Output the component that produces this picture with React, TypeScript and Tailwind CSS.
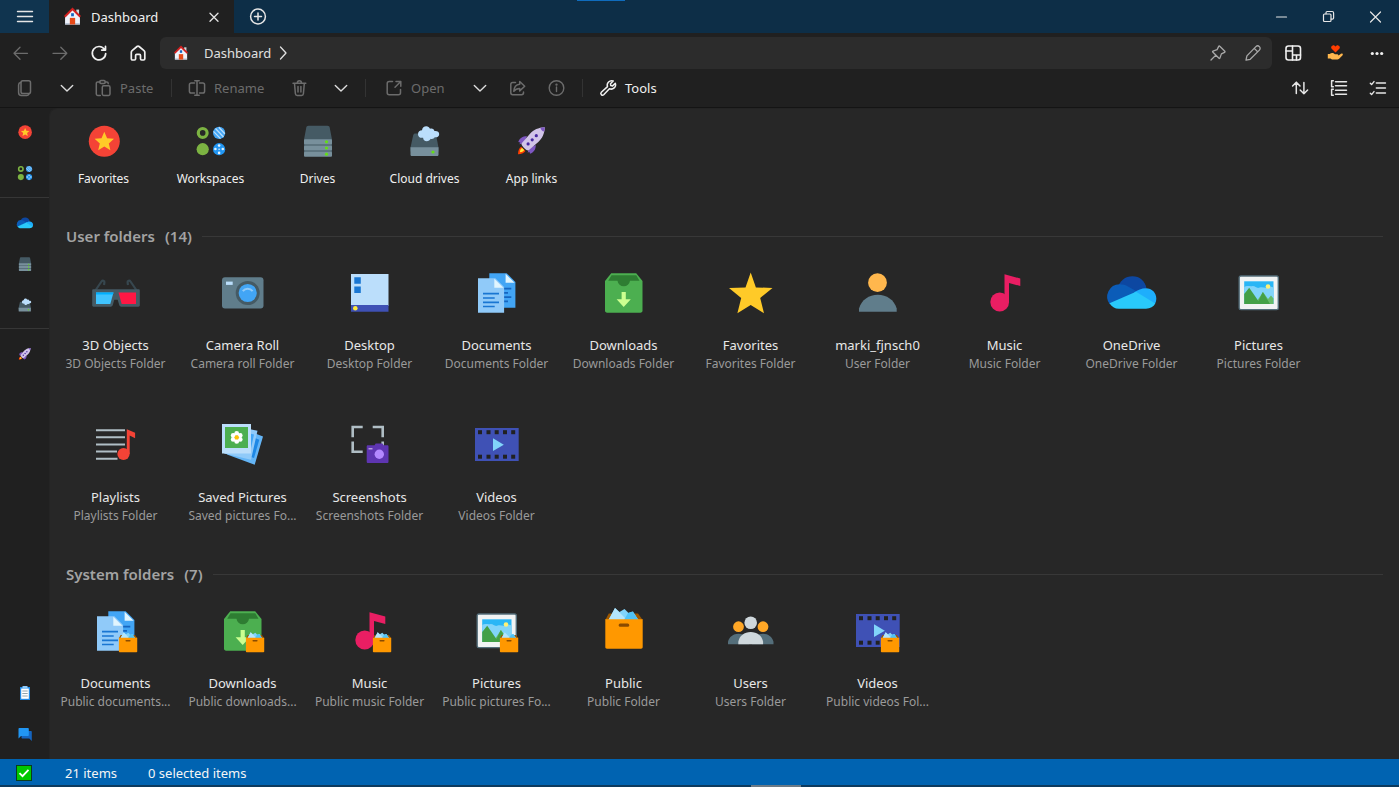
import React from "react";

type IconProps = { className?: string };

/* ---------- line icons ---------- */

function Line({ className = "size-4", children, w = 1.3 }: { className?: string; children: React.ReactNode; w?: number }) {
  return (
    <svg
      viewBox="0 0 16 16"
      className={"shrink-0 overflow-visible " + className}
      fill="none"
      stroke="currentColor"
      strokeWidth={w}
      strokeLinecap="round"
      strokeLinejoin="round"
      aria-hidden="true"
    >
      {children}
    </svg>
  );
}

const MenuIcon = () => (
  <Line w={1.4}><path d="M.5 2.5h15M.5 7.5h15M.5 12.5h15" /></Line>
);
const CloseIcon = ({ className }: IconProps) => (
  <Line className={className} w={1.3}><path d="M4 4.300l8 8M12 4.300l-8 8" /></Line>
);
const PlusCircle = () => (
  <Line w={1.5}><circle cx="8" cy="7.500" r="7.400" /><path d="M8 4v7M4.500 7.500h7" /></Line>
);
const BackIcon = () => (
  <Line><path d="M14.500 8.300H1.300M7 2.300L1 8.300l6 6" /></Line>
);
const ForwardIcon = () => (
  <Line><path d="M1 8.300h13.500M8.800 2.300l6 6-6 6" /></Line>
);
const RefreshIcon = () => (
  <Line w={1.700}><path d="M13.600 4.500A6.700 6.700 0 1 0 14.700 8.600M14.500 1.400v3.700h-3.800" /></Line>
);
const HomeIcon = () => (
  <Line w={1.700}><path d="M1.300 7.200c0-.7.3-1.200.8-1.600l4.900-4.100c.6-.5 1.500-.5 2.100 0L14 5.600c.5.400.8 1 .8 1.600v6.600c0 .7-.5 1.200-1.200 1.200h-1.900c-.7 0-1.200-.5-1.200-1.200v-3.300c0-.6-.5-1.100-1.100-1.100H6.700c-.6 0-1.100.5-1.100 1.100v3.300c0 .7-.5 1.200-1.200 1.200H2.500c-.7 0-1.200-.5-1.200-1.200z" /></Line>
);
const ChevronRight = () => (
  <Line className="size-4"><path d="M5.500 2l5.500 6-5.500 6" /></Line>
);
const ChevronDown = () => (
  <Line className="size-4" w={1.400}><path d="M2.300 5.500L8 11l5.700-5.500" /></Line>
);
const PinIcon = () => (
  <Line><path d="M9.800 1.200l5 5c.4.4.3.900-.2 1.100l-3.200 1.600-1.500 4.200c-.1.400-.6.500-.9.200L2.700 7c-.3-.3-.2-.8.200-.9l4.200-1.500 1.600-3.200c.2-.5.800-.6 1.100-.2zM5.600 10.400L1 15" /></Line>
);
const PencilIcon = () => (
  <Line><path d="M10.900 1.600a2.400 2.400 0 0 1 3.500 3.500L5.200 14.300 1 15.200l.9-4.300zM9.300 3.400l3.300 3.300" /></Line>
);
const LayoutIcon = () => (
  <Line w={1.600}><rect x="1" y="1" width="14.500" height="14" rx="2.500" /><path d="M7.500 1v14M1 6h6.500M7.500 10h8M11.500 10v5" /></Line>
);
const DotsIcon = () => (
  <svg viewBox="0 0 16 16" className="size-4" fill="currentColor" aria-hidden="true">
    <circle cx="3.300" cy="8.500" r="1.600" /><circle cx="8" cy="8.500" r="1.600" /><circle cx="12.700" cy="8.500" r="1.600" />
  </svg>
);
const CopyIcon = () => (
  <Line w={1.500}><rect x="4" y=".8" width="9.500" height="12.700" rx="1.800" /><path d="M3.600 2.600C2.400 2.900 1.600 3.700 1.600 5v7.500c0 2 1.100 3 2.800 3h5.400c1 0 1.700-.5 2.100-1.300" /></Line>
);
const PasteIcon = () => (
  <Line w={1.500}><path d="M5 1.900H2.700c-.8 0-1.400.6-1.400 1.400v10.800c0 .8.600 1.400 1.400 1.400h2.600M10.200 1.900h1.600c.8 0 1.400.6 1.400 1.400v.5" /><rect x="4.800" y=".6" width="5.400" height="2.900" rx="1.200" /><rect x="7.300" y="5.800" width="7.700" height="9.700" rx="1.400" /></Line>
);
const RenameIcon = () => (
  <Line w={1.500}><path d="M5.500 3H2.200C1.100 3 .4 3.700.4 4.800v6.400c0 1.100.7 1.800 1.800 1.800h3.300M10.500 3h3.300c1.100 0 1.800.7 1.800 1.800v6.400c0 1.100-.7 1.800-1.800 1.800h-3.300M8 .7v14.600M5.800.7h4.400M5.800 15.300h4.400" /></Line>
);
const TrashIcon = () => (
  <Line w={1.500}><path d="M1 3.300h12.800M5.300 3.100C5.300 1.700 6.100.8 7.400.8s2.100.9 2.100 2.300M2.500 3.500l.9 10.200c.1 1.100.8 1.700 1.800 1.700h4.400c1 0 1.700-.6 1.800-1.700l.9-10.200M6 6.500v5.500M8.900 6.500v5.500" /></Line>
);
const OpenIcon = () => (
  <Line w={1.500}><path d="M6.500 1.500H3.200C2 1.500 1.200 2.300 1.200 3.500v9.300c0 1.200.8 2 2 2h9.300c1.200 0 2-.8 2-2V9.500M10 1.500h4.800v4.800M14.500 1.800L9 7.300" /></Line>
);
const ShareIcon = () => (
  <Line w={1.500}><path d="M5.500 2.500H2.700c-1.100 0-1.900.8-1.900 1.900v8.400c0 1.100.8 1.900 1.900 1.900h8.900c1.100 0 1.900-.8 1.900-1.900V12M9.700 1.500l5 4.700-5 4.700V8.400c-2.700 0-4.400.7-5.900 2.900.2-4 2.200-6.700 5.900-7.100z" /></Line>
);
const InfoIcon = () => (
  <Line w={1.400}><circle cx="7.500" cy="8" r="7.300" /><path d="M7.500 7v4.500" /><circle cx="7.500" cy="4.600" r=".5" fill="currentColor" /></Line>
);
const WrenchIcon = () => (
  <Line w={1.500}><path d="M15.300 3.200a4.400 4.400 0 0 1-5.900 5.500l-5.700 6a1.700 1.700 0 0 1-2.400-2.400l6.200-5.700A4.400 4.400 0 0 1 13.200 1l-2.700 2.800.3 1.800 1.800.3z" /></Line>
);
const SortIcon = () => (
  <Line w={1.500}><path d="M4.300 13.500V2.300M.6 6l3.700-3.800L8 6M11.900 2.500v11.200M8.200 10l3.700 3.800 3.700-3.800" /></Line>
);
const GroupIcon = () => (
  <Line w={1.500}><path d="M4.500 1.800h11M4.500 5.800h11M4.500 10.200h11M4.500 14.200h11M2.300.8H.6v5.900h1.700M2.300 9.300H.6v5.900h1.700" /></Line>
);
const ChecklistIcon = () => (
  <Line w={1.400}><path d="M6.300 3h9.200M6.300 8h9.200M6.300 13h9.200M.3 3.300l1.300 1.300L4 1.600M.3 13.300l1.300 1.300L4 11.600" /></Line>
);
const MinimizeIcon = () => <Line w={1.200}><path d="M2.500 8h10" /></Line>;
const RestoreIcon = () => (
  <Line w={1.200}><rect x="2.500" y="5" width="7.500" height="7.500" rx="1" /><path d="M5 4.800V3.700c0-.8.500-1.200 1.200-1.200h5c.9 0 1.400.5 1.400 1.400v5c0 .7-.5 1.200-1.300 1.200h-1.100" /></Line>
);
const WindowClose = () => <Line w={1.200}><path d="M2.500 3l10 10M12.500 3l-10 10" /></Line>;

/* ---------- colour icons ---------- */

function Art({ className = "size-12", box = 48, children }: { className?: string; box?: number; children: React.ReactNode }) {
  return (
    <svg viewBox={`0 0 ${box} ${box}`} className={"shrink-0 overflow-visible " + className} aria-hidden="true">
      {children}
    </svg>
  );
}

const HouseIcon = ({ className }: IconProps) => (
  <Art box={16} className={className}>
    <path d="M11.600 1.500h2.600v5h-2.600z" fill="#cfd8dc" />
    <path d="M8 1L1 8v7.500h14V8z" fill="#eef2fb" />
    <path d="M1 14.200h14v1.300H1z" fill="#b8c4d6" />
    <path d="M.7 8.200L8 .9l7.300 7.300" fill="none" stroke="#d3201f" strokeWidth="1.900" />
    <path d="M5.500 9.300h5v6.200h-5z" fill="#e64a19" />
    <path d="M6.700 4.900h2.600v2.900H6.700z" fill="#1565c0" />
  </Art>
);
const DonateIcon = () => (
  <Art box={16} className="size-4">
    <path d="M8.500 7.500L4.700 3.800C3.700 2.800 4 .7 5.800.4 7 .2 8 .8 8.500 1.700 9 .8 10 .2 11.200.4c1.800.3 2.100 2.400 1.100 3.400z" fill="#ff3d00" />
    <path d="M.8 9h1.900c1.200-1 2.800-1.300 4.200-.5l1 .8h2.300c1.400 0 1.400 1.700.2 1.800l2.600-1.600c1-1 2.200-1.200 2.700-.5.300.4.2.9-.3 1.400l-3 3c-.8.700-1.500 1-2.600 1H5l-1.600-.9H.8z" fill="#ffb74d" />
  </Art>
);

const StarBadge = ({ className }: IconProps) => (
  <Art box={32} className={className}>
    <circle cx="16.300" cy="16.300" r="15.500" fill="#f44336" />
    <path d="M16.300 6.800l2.800 6.400 6.900.6-5.200 4.600 1.600 6.800-6.100-3.600-6.100 3.600 1.600-6.800-5.200-4.600 6.900-.6z" fill="#ffca28" />
  </Art>
);
const WorkspacesIcon = ({ className }: IconProps) => (
  <Art box={32} className={className}>
    <circle cx="7.700" cy="7.900" r="4.400" fill="none" stroke="#7cb342" strokeWidth="3.200" />
    <circle cx="7.700" cy="24.200" r="6.100" fill="#7cb342" />
    <circle cx="24.100" cy="7.900" r="6.100" fill="#42a5f5" />
    <path d="M20.500 3.500l8 8.500M23.800 2.300l6 6.400M18.500 6.400l7 7.200" stroke="#bbdefb" strokeWidth="1.300" />
    <circle cx="24.100" cy="24.200" r="6.100" fill="#2196f3" />
    <g fill="#e3f2fd"><circle cx="24.100" cy="20.600" r="1.300" /><circle cx="20.400" cy="24" r="1.300" /><circle cx="27.800" cy="24" r="1.300" /><circle cx="24.100" cy="27.900" r="1.300" /><circle cx="24.100" cy="24.200" r=".8" /></g>
  </Art>
);
const DrivesIcon = ({ className }: IconProps) => (
  <Art box={32} className={className}>
    <path d="M6.500.7h19c1.300 0 2 .7 2.200 1.900L30 14.500v13H2v-13L4.300 2.600C4.500 1.400 5.200.7 6.500.7z" fill="#455a64" />
    <g fill="#78909c"><rect x="2" y="14.200" width="28" height="5.200" rx="1" /><rect x="2" y="20.400" width="28" height="5.200" rx="1" /><rect x="2" y="26.600" width="28" height="5.200" rx="1" /></g>
    <g fill="#64dd17"><circle cx="24.500" cy="16.800" r="1.600" /><circle cx="24.500" cy="23" r="1.600" /><circle cx="24.500" cy="29.200" r="1.600" /></g>
  </Art>
);
const CloudDriveIcon = ({ className }: IconProps) => (
  <Art box={32} className={className}>
    <path d="M6.500 8.500H25c1.200 0 1.800.6 2.100 1.700L29.500 22.500v4H1.500v-4L4.200 10.200c.3-1.100 1-1.700 2.300-1.700z" fill="#455a64" />
    <path d="M1.500 22.300h28v7.200c0 1-.6 1.500-1.500 1.500H3c-.9 0-1.500-.5-1.500-1.500z" fill="#78909c" />
    <circle cx="24" cy="27" r="1.600" fill="#64dd17" />
    <path d="M13 5.300c.3-2.500 2-4 4.300-4 1.800 0 3 .9 3.700 2.500 2-.9 4.200.2 4.400 2.300 2.700-.4 4.800.8 4.800 2.900 0 2.400-2 3.700-4.500 3.300-.8 1.400-2.400 1.900-4 1.400-.8 1.600-2.200 2.500-3.900 2.500-2.300 0-3.600-1.500-3.700-3.500-2.600.7-5.100-.8-5.100-3.500 0-2.500 1.800-3.900 4-3.900z" fill="#bbdefb" />
  </Art>
);
const RocketIcon = ({ className }: IconProps) => (
  <Art box={32} className={className}>
    <g transform="translate(-1 0)">
      <path d="M12 11.200c-4.500 0-7.500 2-8.700 5.800l2 .6-1 1.700 4.500-1.300zM20.800 20c0 4.500-2 7.500-5.800 8.700l-.6-2-1.700 1 1.300-4.500z" fill="#7e57c2" />
      <path d="M3 29.200c.2-3.800 1.200-6.300 3.300-7.400l4.100 4.100c-1.100 2.100-3.600 3.100-7.400 3.300z" fill="#ff3d00" />
      <path d="M4.900 27.300c.2-2.300.9-3.800 2.200-4.300l2.100 2.100c-.5 1.300-2 2-4.300 2.200z" fill="#ffeb3b" />
      <path d="M29.800 2.200c-6.700.3-11 2.500-14.800 6.500L6.500 18.600c-.4 2.200 4.700 7.300 6.900 6.900l9.900-8.500c4-3.800 6.200-8.100 6.500-14.800z" fill="#d1c4e9" />
      <path d="M29.800 2.200c-1.500.1-3 .3-4.400.6.2 1.900 1.900 3.600 3.800 3.800.3-1.400.5-2.900.6-4.400z" fill="#7e57c2" />
      <g fill="#4527a0"><circle cx="21.300" cy="10.700" r="1.600" /><circle cx="17.200" cy="14.800" r="1.600" /><circle cx="13.100" cy="18.900" r="1.600" /></g>
    </g>
  </Art>
);

const GlassesIcon = () => (
  <Art>
    <path d="M3 22L9.500 12.500c1-1.500 3.300-1 2.900 1L12 16M45 22l-6.500-9.500c-1-1.500-3.300-1-2.900 1L36 16" fill="none" stroke="#37474f" strokeWidth="2.200" />
    <path d="M1.500 20.300h45c.9 0 1.300.5 1.300 1.300v14.700c0 .9-.5 1.400-1.400 1.400H29.300c-1 0-1.600-.5-2-1.400l-1.600-5.600h-3.400l-1.600 5.600c-.4.900-1 1.400-2 1.400H1.600c-.9 0-1.400-.5-1.400-1.400V21.600c0-.8.400-1.300 1.300-1.300z" fill="#455a64" />
    <path d="M4 23.500h17.500L18.300 35H4z" fill="#40c4ff" /><path d="M4 23.500h17.500l-.6 2H4z" fill="#00b0ff" />
    <path d="M26.500 23.500H44V35H29.700z" fill="#ff1744" />
  </Art>
);
const CameraIcon = () => (
  <Art>
    <rect x="3" y="8.300" width="41.500" height="31.300" rx="3" fill="#607d8b" />
    <rect x="7" y="12.600" width="6.700" height="3.300" fill="#bbdefb" />
    <circle cx="28.700" cy="24" r="12" fill="#455a64" /><circle cx="28.700" cy="24" r="9.100" fill="#42a5f5" />
    <path d="M23.800 22.200a6.200 6.200 0 0 1 9.800 0" fill="none" stroke="#90caf9" strokeWidth="2" />
  </Art>
);
const DesktopIcon = () => (
  <Art>
    <path d="M5 5h37.500v32H5z" fill="#bbdefb" /><path d="M5 36h37.500v6.700H5z" fill="#3f51b5" />
    <path d="M8.300 8.300h6.500v6.500H8.300zM8.300 17.400h6.500v6.500H8.300z" fill="#1976d2" />
    <circle cx="9.300" cy="39.300" r="2.300" fill="#ffeb3b" />
  </Art>
);
const DocsArt = () => (
  <>
    <path d="M16.300 4.300h17.400l8.700 8.700v25.700H16.300z" fill="#42a5f5" /><path d="M32.600 4.800v8.900h9z" fill="#e1f5fe" />
    <path d="M28 19.700h10.300M28 23.900h7M28 28.100h10.300M28 32.300h7" stroke="#1565c0" strokeWidth="1.700" />
    <path d="M5 9.200h17.400l8.700 8.700v25.800H5z" fill="#90caf9" /><path d="M21.300 9.700v9h9z" fill="#e1f5fe" />
    <path d="M10 24.700h16M10 29h11.700M10 33.300h16M10 37.500h11.700" stroke="#1976d2" strokeWidth="1.700" />
  </>
);
const DownloadsArt = () => (
  <>
    <path d="M11.200 4.300h25L42.500 12v29.500c0 1.400-.8 2.200-2.200 2.200H7.200C5.800 43.700 5 42.900 5 41.500V12z" fill="#4caf50" />
    <path d="M11.500 6.300h24.800l3.200 5.500H30a6.300 6.300 0 0 1-12.500 0H8.200z" fill="#2e7d32" />
    <path d="M21.600 23h4.200v7.200h5L23.700 38l-7.100-7.800h5z" fill="#ccff90" />
  </>
);
const StarIcon = () => (
  <Art><path d="M23.700 3.500l5.200 14.900 16.600.5-12.300 10 3.800 15.400-13.300-8.400-13.300 8.400L14.200 28.900 2 18.900l16.500-.5z" fill="#ffca28" /></Art>
);
const UserIcon = () => (
  <Art><circle cx="23.500" cy="13.700" r="9.400" fill="#ffb74d" /><path d="M5 42.700v-3.200c2.500-8.700 10-13.800 18.800-13.800s16.400 5.100 18.900 13.800v3.200z" fill="#607d8b" /></Art>
);
const MusicArt = () => (
  <><circle cx="18.700" cy="33" r="9.400" fill="#e91e63" /><path d="M23.500 5.300l15.800 4.200V17L28 14v19h-4.500z" fill="#e91e63" /></>
);
const OneDriveIcon = ({ className }: IconProps) => (
  <Art className={className}>
    <path d="M9 20C12 11.800 17 7.300 24.500 7.300c7.200 0 12.300 4.500 14 12l-10 4z" fill="#0d47a1" />
    <path d="M11.500 15.200c3.500 0 6 .8 8.500 2.300l11 6.300L1.800 35.300A12.500 12.500 0 0 1 11.500 15.200z" fill="#0b5cb8" />
    <path d="M26 23.500c3.800-2.300 7.500-4.200 12-4.200 5.700 0 10.300 4.500 10.300 10.200 0 2-.5 3.900-1.500 5.400z" fill="#1eaefc" />
    <path d="M1.500 34.200L28 22.700l19.300 11.800c-1.800 3.400-5 5.200-9.300 5.200H11c-4.300 0-7.400-2-9.500-5.500z" fill="#29c9fb" />
  </Art>
);
const PicturesArt = () => (
  <>
    <rect x="3.500" y="6.300" width="40.500" height="35" rx="2.500" fill="#546e7a" />
    <rect x="4.900" y="7.700" width="37.700" height="32.200" rx="1" fill="#f1f3f3" />
    <path d="M9.200 12.300h29.300V35H9.200z" fill="#29b6f6" />
    <path d="M9.200 18c3-2 6 0 8.500-1 3 0 4 3 7 1.500 3-1 5 1 8 0 2-1 4-1 5.800 0V35H9.200z" fill="#81d4fa" />
    <circle cx="33" cy="17.500" r="2.300" fill="#fff176" />
    <path d="M20 35l8-12 5 7 3-3.500 2.500 3V35z" fill="#66bb6a" /><path d="M22 35l5.800-12L35 35z" fill="#43a047" />
    <path d="M9.200 25l5-6.200L25.500 35H9.200z" fill="#43a047" />
  </>
);
const PlaylistIcon = () => (
  <Art>
    <path d="M4 9.200h29M4 16.300h29M4 23.400h29M4 30.600h21M4 37.700h21.500" stroke="#b0bec5" strokeWidth="2" />
    <circle cx="31.500" cy="33" r="6.100" fill="#f44336" /><path d="M34.800 8.200l8.300 3.500v5.500l-5.400-2.600V33h-2.900z" fill="#f44336" />
  </Art>
);
const SavedIcon = () => (
  <Art>
    <path d="M33 11.300l11 4.200-8.300 28.200L8 33.500z" fill="#64b5f6" /><path d="M36 17l4.300 1.700L35 37l-6-2z" fill="#1e88e5" />
    <path d="M28 7.500l10.500 2.200-6.500 29L5 32.500z" fill="#90caf9" /><path d="M31 12.500l4 1L31 32l-5-1z" fill="#42a5f5" />
    <path d="M3 3h29v29.500H3z" fill="#bbdefb" /><path d="M6 6h23v21H6z" fill="#4caf50" />
    <g fill="#fff"><circle cx="17.700" cy="12.400" r="2.400" /><circle cx="17.700" cy="20.400" r="2.400" /><circle cx="14.200" cy="14.400" r="2.400" /><circle cx="14.200" cy="18.400" r="2.400" /><circle cx="21.200" cy="14.400" r="2.400" /><circle cx="21.200" cy="18.400" r="2.400" /></g>
    <circle cx="17.700" cy="16.400" r="2.200" fill="#ffc107" />
  </Art>
);
const ScreenshotIcon = () => (
  <Art>
    <path d="M6.700 16.300V6h10M26.700 6h10v10.300M6.700 20.500v10.300h10M36.700 20.500v6" fill="none" stroke="#b0bec5" strokeWidth="2.600" />
    <path d="M28.500 24.300l1.200-1.700h6.800l1.200 1.700h3.500c.8 0 1.300.5 1.300 1.300v15.100c0 .8-.5 1.300-1.300 1.300H22c-.8 0-1.300-.5-1.300-1.300V25.600c0-.8.500-1.300 1.300-1.300z" fill="#5e35b1" />
    <path d="M22.500 27h4v1.500h-4z" fill="#b39ddb" /><circle cx="33.300" cy="33.300" r="4.700" fill="#b388ff" />
  </Art>
);
const VideoArt = () => (
  <>
    <path d="M2 7h43.700v33H2z" fill="#3f51b5" />
    <g fill="#212121">{[5, 13.500, 21.700, 30, 38.200].map((x) => (<g key={x}><rect x={x} y="9.200" width="4" height="4" /><rect x={x} y="33.700" width="4" height="4" /></g>))}</g>
    <path d="M20 17.300v12.800l10.800-6.400z" fill="#81d4fa" />
  </>
);
const BoxArt = () => (
  <>
    <path d="M5.300 13l3.500-6.500H38l4.700 6.500z" fill="#9c5700" />
    <path d="M8.500 13L15 1l4.500 4 5-3 4 4 4.500-1.500L38.500 13z" fill="#81d4fa" /><path d="M8.500 13L15 1l12 12z" fill="#b3e5fc" />
    <path d="M24 13l4-7 4.500-1.500L38.500 13z" fill="#4fc3f7" />
    <path d="M5.300 12.300h37.400V40c0 1-.6 1.700-1.700 1.700H7c-1.100 0-1.700-.7-1.700-1.700z" fill="#ff9800" />
    <rect x="18.700" y="16.600" width="10.500" height="3.200" rx="1.500" fill="#8a4b00" />
  </>
);
const BoxBadge = () => <g transform="translate(24.300 24.800) scale(.49)"><BoxArt /></g>;
const UsersIcon = () => (
  <Art>
    <g fill="#ffa726"><circle cx="11.500" cy="19.700" r="5.400" /><circle cx="36" cy="19.700" r="5.400" /></g>
    <path d="M1 37.300v-2.500c1.200-5 5.300-8.100 10.500-8.100S21 29.500 22 34v3.300zM25 37.300V34c1-4.500 5.800-7.300 11-7.300s9.300 3.100 10.500 8.100v2.500z" fill="#546e7a" />
    <circle cx="23.700" cy="15.700" r="6.300" fill="#cfd8dc" /><path d="M11.300 37.300v-2.500c1-6 6-9.800 12.400-9.800s11.400 3.800 12.400 9.800v2.500z" fill="#cfd8dc" />
  </Art>
);
const ClipboardIcon = () => (
  <Art box={16} className="size-4">
    <path d="M3 2h10v13H3z" fill="#1e88e5" /><path d="M4.200 3.500h7.600v10.300H4.200z" fill="#fff" />
    <path d="M5.500 1h5v2.800h-5z" fill="#90caf9" /><path d="M5.300 6h5.400M5.300 8.500h5.400M5.300 11h5.400" stroke="#90a4ae" strokeWidth="1" />
  </Art>
);
const ChatIcon = () => (
  <Art box={16} className="size-4">
    <path d="M4.500 5h9.300c.6 0 1 .4 1 1v9l-2.500-2.500H5.500c-.6 0-1-.4-1-1z" fill="#1565c0" />
    <path d="M2.500 2h8.300c.6 0 1 .4 1 1v6c0 .6-.4 1-1 1H4l-2.500 2.500V3c0-.6.400-1 1-1z" fill="#2196f3" />
  </Art>
);

/* ---------- data ---------- */

type Folder = { name: string; kind: string; icon: React.ReactNode };

const shortcuts = [
  { name: "Favorites", icon: <StarBadge className="size-8" /> },
  { name: "Workspaces", icon: <WorkspacesIcon className="size-8" /> },
  { name: "Drives", icon: <DrivesIcon className="size-8" /> },
  { name: "Cloud drives", icon: <CloudDriveIcon className="size-8" /> },
  { name: "App links", icon: <RocketIcon className="size-8" /> },
];

const userFolders: Folder[] = [
  { name: "3D Objects", kind: "3D Objects Folder", icon: <GlassesIcon /> },
  { name: "Camera Roll", kind: "Camera roll Folder", icon: <CameraIcon /> },
  { name: "Desktop", kind: "Desktop Folder", icon: <DesktopIcon /> },
  { name: "Documents", kind: "Documents Folder", icon: <Art><DocsArt /></Art> },
  { name: "Downloads", kind: "Downloads Folder", icon: <Art><DownloadsArt /></Art> },
  { name: "Favorites", kind: "Favorites Folder", icon: <StarIcon /> },
  { name: "marki_fjnsch0", kind: "User Folder", icon: <UserIcon /> },
  { name: "Music", kind: "Music Folder", icon: <Art><MusicArt /></Art> },
  { name: "OneDrive", kind: "OneDrive Folder", icon: <OneDriveIcon className="size-12" /> },
  { name: "Pictures", kind: "Pictures Folder", icon: <Art><PicturesArt /></Art> },
  { name: "Playlists", kind: "Playlists Folder", icon: <PlaylistIcon /> },
  { name: "Saved Pictures", kind: "Saved pictures Fo...", icon: <SavedIcon /> },
  { name: "Screenshots", kind: "Screenshots Folder", icon: <ScreenshotIcon /> },
  { name: "Videos", kind: "Videos Folder", icon: <Art><VideoArt /></Art> },
];

const systemFolders: Folder[] = [
  { name: "Documents", kind: "Public documents...", icon: <Art><DocsArt /><BoxBadge /></Art> },
  { name: "Downloads", kind: "Public downloads...", icon: <Art><DownloadsArt /><BoxBadge /></Art> },
  { name: "Music", kind: "Public music Folder", icon: <Art><MusicArt /><BoxBadge /></Art> },
  { name: "Pictures", kind: "Public pictures Fo...", icon: <Art><PicturesArt /><BoxBadge /></Art> },
  { name: "Public", kind: "Public Folder", icon: <Art><BoxArt /></Art> },
  { name: "Users", kind: "Users Folder", icon: <UsersIcon /> },
  { name: "Videos", kind: "Public videos Fol...", icon: <Art><VideoArt /><BoxBadge /></Art> },
];

/* ---------- parts ---------- */

function IconButton({ label, className, disabled, children }: { label: string; className: string; disabled?: boolean; children: React.ReactNode }) {
  return (
    <button type="button" aria-label={label} disabled={disabled} className={"flex h-full shrink-0 items-center justify-center " + className}>
      {children}
    </button>
  );
}

const Separator = () => <span className="mx-1 h-[18px] w-px shrink-0 bg-[#333333]" />;

function TitleBar() {
  return (
    <header className="relative flex h-[33px] bg-[#0d2e47] text-[#e6e6e6]">
      <IconButton label="Menu" className="w-[49px] bg-[#10344f]"><MenuIcon /></IconButton>
      <div className="flex w-[185px] items-center bg-[#202020] pl-[15px] pr-3">
        <HouseIcon className="size-[17px]" />
        <span className="ml-[10px] flex-1 text-[13px] leading-5 text-[#f0f0f0]">Dashboard</span>
        <IconButton label="Close tab" className="w-4"><CloseIcon className="size-4" /></IconButton>
      </div>
      <IconButton label="New tab" className="w-12"><PlusCircle /></IconButton>
      <div className="ml-auto flex h-full">
        <IconButton label="Minimize" className="w-[47px]"><MinimizeIcon /></IconButton>
        <IconButton label="Restore" className="w-[47px]"><RestoreIcon /></IconButton>
        <IconButton label="Close" className="w-[47px]"><WindowClose /></IconButton>
      </div>
      <span className="absolute left-[577px] top-0 h-px w-12 bg-[#0f6cbd]" />
    </header>
  );
}

function NavBar() {
  return (
    <nav aria-label="Location" className="flex h-10 items-center pl-px text-[#f0f0f0]">
      <IconButton label="Back" disabled className="w-[39px] text-[#6c6c6c]"><BackIcon /></IconButton>
      <IconButton label="Forward" disabled className="w-[39px] text-[#6c6c6c]"><ForwardIcon /></IconButton>
      <IconButton label="Refresh" className="w-[39px]"><RefreshIcon /></IconButton>
      <IconButton label="Home" className="w-[39px]"><HomeIcon /></IconButton>
      <div className="ml-[3px] flex h-8 flex-1 items-center rounded-md bg-[#2c2c2c] pl-[14px]">
        <HouseIcon className="size-[14px]" />
        <a href="#dashboard" className="ml-4 text-[13px] leading-5 text-[#e0e0e0]">Dashboard</a>
        <IconButton label="Show subfolders" className="ml-1 w-4 text-[#e0e0e0]"><ChevronRight /></IconButton>
        <div className="ml-auto flex h-full pr-[2px] text-[#a8a8a8]">
          <IconButton label="Pin" className="w-[35px]"><PinIcon /></IconButton>
          <IconButton label="Edit address" className="w-[35px]"><PencilIcon /></IconButton>
        </div>
      </div>
      <div className="flex h-full pr-px">
        <IconButton label="Layout" className="w-[42px]"><LayoutIcon /></IconButton>
        <IconButton label="Donate" className="w-[42px]"><DonateIcon /></IconButton>
        <IconButton label="More" className="w-[42px]"><DotsIcon /></IconButton>
      </div>
    </nav>
  );
}

function ToolBar() {
  return (
    <div role="toolbar" aria-label="File actions" className="flex h-[35px] items-center border-b border-[#141414] pb-1 text-[13px] leading-5 text-[#6c6c6c]">
      <IconButton label="Copy" disabled className="w-[50px]"><CopyIcon /></IconButton>
      <IconButton label="Copy options" className="w-[34px] text-[#dcdcdc]"><ChevronDown /></IconButton>
      <button type="button" disabled className="flex h-full w-[83px] items-center gap-[9px] pl-[11px]"><PasteIcon />Paste</button>
      <Separator />
      <button type="button" disabled className="flex h-full w-[103px] items-center gap-[9px] pl-[13px]"><RenameIcon />Rename</button>
      <IconButton label="Delete" disabled className="w-[42px]"><TrashIcon /></IconButton>
      <IconButton label="Delete options" className="w-10 text-[#dcdcdc]"><ChevronDown /></IconButton>
      <Separator />
      <button type="button" disabled className="flex h-full w-[90px] items-center gap-[9px] pl-4"><OpenIcon />Open</button>
      <IconButton label="Open options" className="w-10 text-[#dcdcdc]"><ChevronDown /></IconButton>
      <IconButton label="Share" disabled className="w-9"><ShareIcon /></IconButton>
      <IconButton label="Properties" disabled className="w-[42px]"><InfoIcon /></IconButton>
      <Separator />
      <button type="button" className="flex h-full items-center gap-[9px] pl-[13px] text-[#f0f0f0]"><WrenchIcon />Tools</button>
      <div className="ml-auto flex h-full pr-[2px] text-[#e6e6e6]">
        <IconButton label="Sort" className="w-[39px]"><SortIcon /></IconButton>
        <IconButton label="Group" className="w-[39px]"><GroupIcon /></IconButton>
        <IconButton label="Select" className="w-[39px]"><ChecklistIcon /></IconButton>
      </div>
    </div>
  );
}

function SideItem({ label, children }: { label: string; children: React.ReactNode }) {
  return (
    <button type="button" aria-label={label} className="flex h-[41px] items-center justify-center">
      {children}
    </button>
  );
}

function SideBar() {
  return (
    <aside className="flex w-[49px] shrink-0 flex-col pb-[5px] pt-[3px]">
      <SideItem label="Favorites"><StarBadge className="size-[14px]" /></SideItem>
      <SideItem label="Workspaces"><WorkspacesIcon className="size-4" /></SideItem>
      <hr className="my-1 border-[#363636]" />
      <SideItem label="OneDrive"><OneDriveIcon className="size-4" /></SideItem>
      <SideItem label="Drives"><DrivesIcon className="size-[14px]" /></SideItem>
      <SideItem label="Cloud drives"><CloudDriveIcon className="size-[14px]" /></SideItem>
      <hr className="mb-1 mt-[3px] border-[#363636]" />
      <SideItem label="App links"><RocketIcon className="size-[14px]" /></SideItem>
      <div className="mt-auto flex flex-col">
        <SideItem label="Clipboard"><ClipboardIcon /></SideItem>
        <SideItem label="Feedback"><ChatIcon /></SideItem>
      </div>
    </aside>
  );
}

function FolderSection({ title, items, className }: { title: string; items: Folder[]; className: string }) {
  return (
    <section className={className}>
      <h2 className="flex h-6 items-center gap-[10px] px-4 text-[15px] font-semibold leading-6 text-[#a3a3a3]">
        <span>{title}</span>
        <span>({items.length})</span>
        <span className="h-px flex-1 bg-[#383838]" />
      </h2>
      <ul className="mt-[21px] flex flex-wrap gap-y-12 pl-[2px]">
        {items.map((f) => (
          <li key={f.name} className="w-[127px]">
            <button type="button" className="flex w-full flex-col items-center">
              {f.icon}
              <span className="mt-[18px] text-[13px] leading-5 text-[#e8e8e8]">{f.name}</span>
              <span className="whitespace-nowrap text-[12px] leading-[18px] text-[#9a9a9a]">{f.kind}</span>
            </button>
          </li>
        ))}
      </ul>
    </section>
  );
}

export default function App() {
  return (
    <div className="flex min-h-screen flex-col bg-[#202020] font-['Noto_Sans','Open_Sans',sans-serif]">
      <TitleBar />
      <NavBar />
      <ToolBar />
      <div className="flex flex-1">
        <SideBar />
        <main className="flex-1 rounded-tl-lg border-l border-t border-[#242424] bg-[#272727] pb-8">
          <ul className="flex flex-wrap pt-4">
            {shortcuts.map((s) => (
              <li key={s.name} className="w-[107px]">
                <button type="button" className="flex w-full flex-col items-center">
                  {s.icon}
                  <span className="mt-[13px] text-[12px] leading-[18px] text-[#f0f0f0]">{s.name}</span>
                </button>
              </li>
            ))}
          </ul>
          <FolderSection title="User folders" items={userFolders} className="mt-9" />
          <FolderSection title="System folders" items={systemFolders} className="mt-[37px]" />
        </main>
      </div>
      <footer className="relative flex h-7 items-center border-b-2 border-[#0c3a5e] bg-[#0063b1] pl-4 pt-px text-[13px] leading-5 text-[#f5f5f5]">
        <svg viewBox="0 0 16 16" className="size-4 shrink-0" role="img" aria-label="Ready">
          <rect x=".5" y=".5" width="15" height="15" fill="#00c800" stroke="#0b3d1c" />
          <path d="M3.500 8.200l3 3 6-6.400" fill="none" stroke="#fff" strokeWidth="1.800" />
        </svg>
        <span className="ml-[33px] w-[83px]">21 items</span>
        <span>0 selected items</span>
        <span className="absolute -bottom-[2px] left-[751px] h-[2px] w-[50px] bg-[#6b7a86]" />
      </footer>
    </div>
  );
}
